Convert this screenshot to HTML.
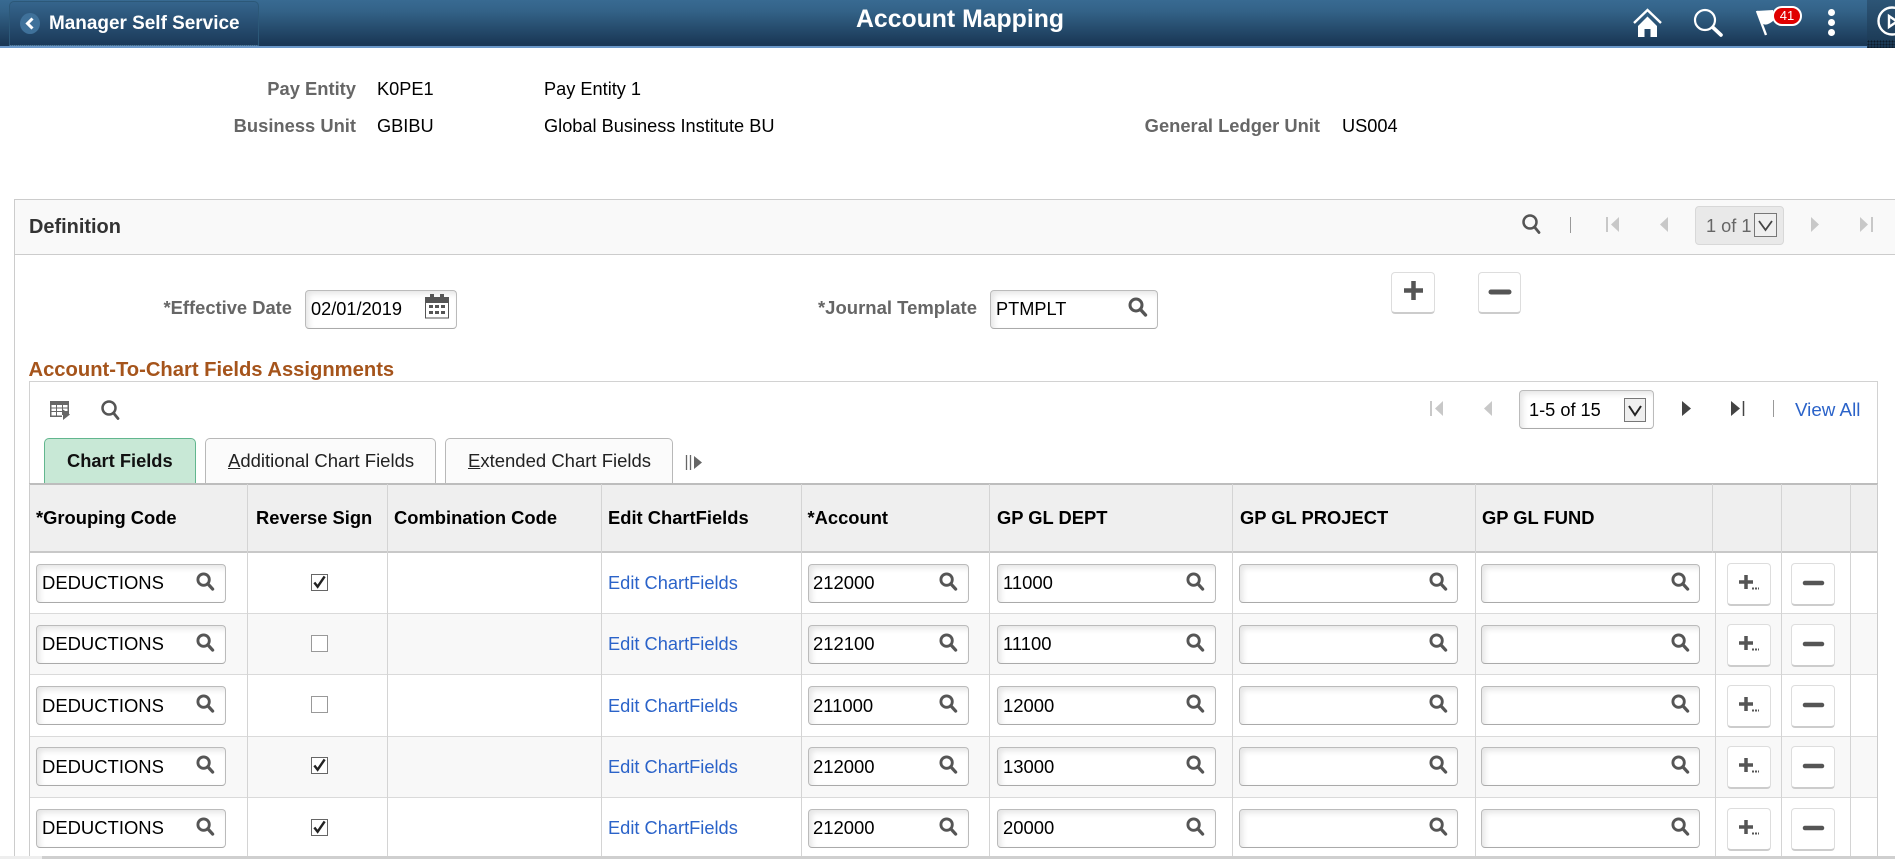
<!DOCTYPE html>
<html><head><meta charset="utf-8"><title>Account Mapping</title>
<style>
html,body{margin:0;padding:0;background:#fff;width:1895px;height:859px;overflow:hidden}
body{position:relative;font-family:"Liberation Sans",Arial,sans-serif;font-size:18.2px;color:#000}
div,span,a,svg{position:absolute;box-sizing:border-box}
.t{white-space:nowrap;line-height:20px;height:20px}
.l{font-weight:bold;color:#666;text-align:right;font-size:18.35px}
.h{font-weight:bold;color:#000;font-size:18.35px}
.rr .t{font-size:18.45px}
a{color:#2b63c9;text-decoration:none}
.rr a.t{font-size:18.25px}
u{text-decoration:underline}
.i{height:39px;background:#fff;border:1px solid #bbb;border-bottom-color:#aaa;border-radius:4px;box-shadow:inset 3px 3px 6px rgba(0,0,0,.1)}
.b{width:44px;height:43px;background:#fff;border:1px solid #ddd;border-bottom:2px solid #ccc;border-radius:4px}
.v{width:1px;background:#d4d4d4}
.rw{left:30px;width:1847px;height:1px;background:#dadada}
.ck{left:311px;width:17px;height:17px;background:#fff;border:1px solid #666}
.un{border-color:#999}
.tab{top:438px;height:46px;border:1px solid #b8b8b8;border-bottom:none;border-radius:5px 5px 0 0;background:#fbfbfb}
.tt{font-size:18.5px}
</style></head><body>
<svg width="0" height="0" style="left:0;top:0"><defs>
<symbol id="s" viewBox="0 0 20 20"><circle cx="8" cy="8" r="6" fill="none" stroke="#555" stroke-width="3"/><path d="M12.5 12.5L17.500 18" stroke="#555" stroke-width="3.400" stroke-linecap="round"/></symbol>
<symbol id="n" viewBox="0 0 20 20"><circle cx="8" cy="8" r="6.500" fill="none" stroke="#555" stroke-width="2.500"/><path d="M12.500 13L17 18.500" stroke="#555" stroke-width="2.800" stroke-linecap="round"/></symbol>
<symbol id="c" viewBox="0 0 16 16"><path d="M2.500 8l3.500 4.500L13.500 1.500" fill="none" stroke="#222" stroke-width="2.600"/></symbol>
</defs></svg>

<!-- header -->
<div style="left:0;top:0;width:1895px;height:48px;background:linear-gradient(#386a92,#336287 25%,#1a3856 95%);border-bottom:2px solid #6b98c9"></div>
<div style="left:9px;top:1px;width:250px;height:45px;border:1px solid #2c5878;border-bottom:1px dotted #5c7e9a;border-radius:5px 5px 0 0;background:linear-gradient(#35658c,#1b3a59)"></div>
<div style="left:20px;top:13px;width:20px;height:21px;border-radius:50%;background:#3f719a"></div>
<svg style="left:20px;top:13px" width="20" height="21"><path d="M12.500 5.500L7.500 10.500L12.500 15.500" fill="none" stroke="#fff" stroke-width="3"/></svg>
<span class="t" style="left:49px;top:14px;font-weight:bold;color:#fff;font-size:18.95px">Manager Self Service</span>
<span class="t" style="left:856px;top:9px;font-weight:bold;color:#fff;font-size:24.8px;line-height:22px">Account Mapping</span>
<svg style="left:1633px;top:8px" width="29" height="30"><path d="M1 15L14.500 2L28 15" fill="none" stroke="#fff" stroke-width="2.400"/><path d="M5 18L14.500 8.500L24 18V29H17.500V21H11.500V29H5Z" fill="#fff"/></svg>
<svg style="left:1693px;top:8px" width="31" height="30"><circle cx="12" cy="12" r="10" fill="none" stroke="#fff" stroke-width="2.200"/><path d="M20 19.500L28 27" stroke="#fff" stroke-width="3.600" stroke-linecap="round"/></svg>
<svg style="left:1755px;top:8px" width="20" height="30"><path d="M1 3L18 2L18 13Q12 18 8 16L3 5Z" fill="#fff"/><path d="M2 3L11 27" stroke="#fff" stroke-width="2.400"/></svg>
<div style="left:1772px;top:6px;width:30px;height:20px;background:#e00000;border:2px solid #fff;border-radius:10px"></div>
<span class="t" style="left:1772px;top:6px;width:30px;text-align:center;color:#fff;font-size:13px;line-height:19px">41</span>
<div style="left:1828px;top:9px;width:7px;height:7px;border-radius:50%;background:#fff"></div>
<div style="left:1828px;top:19px;width:7px;height:7px;border-radius:50%;background:#fff"></div>
<div style="left:1828px;top:29px;width:7px;height:7px;border-radius:50%;background:#fff"></div>
<div style="left:1867px;top:0;width:28px;height:48px;background:linear-gradient(#2d5576,#1a3752)"></div>
<div style="left:1867px;top:40px;width:28px;height:8px;background-image:radial-gradient(#0d1c2b 40%,transparent 45%);background-size:3px 3px"></div>
<svg style="left:1867px;top:0" width="28" height="40"><circle cx="25" cy="21" r="13.500" fill="none" stroke="#fff" stroke-width="2.400"/><path d="M22 16L30 21.500L22 27Z" fill="none" stroke="#fff" stroke-width="2.400"/></svg>

<!-- top fields -->
<span class="t l" style="left:200px;width:156px;top:79px">Pay Entity</span>
<span class="t" style="left:377px;top:79px">K0PE1</span>
<span class="t" style="left:544px;top:79px">Pay Entity 1</span>
<span class="t l" style="left:200px;width:156px;top:116px">Business Unit</span>
<span class="t" style="left:377px;top:116px">GBIBU</span>
<span class="t" style="left:544px;top:116px">Global Business Institute BU</span>
<span class="t l" style="left:1120px;width:200px;top:116px">General Ledger Unit</span>
<span class="t" style="left:1342px;top:116px">US004</span>

<!-- definition -->
<div style="left:14px;top:199px;width:1881px;height:56px;background:#f9f9f9;border-top:1px solid #ccc;border-bottom:1px solid #ccc"></div>
<div style="left:14px;top:199px;width:1px;height:657px;background:#ccc"></div>
<span class="t" style="left:29px;top:217px;font-weight:bold;color:#333;font-size:19.95px">Definition</span>
<svg style="left:1522px;top:214px" width="20" height="20"><use href="#n"/></svg>
<div style="left:1570px;top:217px;width:1px;height:16px;background:#999"></div>
<svg style="left:1606px;top:216px" width="14" height="17"><path d="M1 1V16" stroke="#c8c8c8" stroke-width="2"/><path d="M13 1V16L5 8.500Z" fill="#c8c8c8"/></svg>
<svg style="left:1658px;top:216px" width="11" height="17"><path d="M10 1V16L2 8.500Z" fill="#c8c8c8"/></svg>
<div style="left:1695px;top:206px;width:89px;height:39px;background:#e9e9e9;border:1px solid #d8d8d8;border-radius:4px"></div>
<span class="t" style="left:1706px;top:216px;color:#666">1 of 1</span>
<div style="left:1754px;top:213px;width:23px;height:24px;background:#efefef;border:1px solid #777"></div>
<svg style="left:1754px;top:213px" width="23" height="24"><path d="M5 8L11.500 17L18 8" fill="none" stroke="#444" stroke-width="1.800"/></svg>
<svg style="left:1809px;top:216px" width="12" height="17"><path d="M2 1V16L10 8.500Z" fill="#c8c8c8"/></svg>
<svg style="left:1859px;top:216px" width="15" height="17"><path d="M1 1V16L9 8.500Z" fill="#c8c8c8"/><path d="M13 1V16" stroke="#c8c8c8" stroke-width="2"/></svg>

<span class="t l" style="left:120px;width:172px;top:298px">*Effective Date</span>
<div class="i" style="left:305px;top:290px;width:152px"></div>
<span class="t" style="left:311px;top:299px;font-size:18.2px">02/01/2019</span>
<svg style="left:424px;top:293px" width="26" height="26"><path d="M1 4H6V1H10V4H16V1H20V4H25V10H1Z" fill="#555"/><rect x="1.500" y="8" width="23" height="17" fill="none" stroke="#555"/><g fill="#555"><rect x="5" y="12" width="4" height="3"/><rect x="11" y="12" width="4" height="3"/><rect x="17" y="12" width="4" height="3"/><rect x="5" y="18" width="4" height="3"/><rect x="11" y="18" width="4" height="3"/><rect x="17" y="18" width="4" height="3"/></g></svg>

<span class="t l" style="left:780px;width:197px;top:298px;font-size:18.5px">*Journal Template</span>
<div class="i" style="left:990px;top:290px;width:168px"></div>
<span class="t" style="left:996px;top:299px;font-size:18.2px">PTMPLT</span>
<svg style="left:1128px;top:297px" width="20" height="20"><use href="#s"/></svg>

<div class="b" style="left:1391px;top:272px;height:42px;width:44px"></div>
<svg style="left:1392px;top:270px" width="43" height="42"><path d="M21.500 11V30M12 20.500H31" stroke="#555" stroke-width="4.500"/></svg>
<div class="b" style="left:1478px;top:272px;height:42px;width:43px"></div>
<svg style="left:1478px;top:272px" width="43" height="42"><path d="M13 20H31" stroke="#555" stroke-width="5" stroke-linecap="round"/></svg>

<span class="t" style="left:28.5px;top:360px;font-weight:bold;color:#a5541b;font-size:20.2px">Account-To-Chart Fields Assignments</span>

<!-- grid frame -->
<div style="left:29px;top:381px;width:1849px;height:103px;border:1px solid #d2d2d2;border-bottom:none"></div>
<svg style="left:49px;top:399px" width="22" height="22"><path d="M1 2H20V16H13V18H1Z" fill="#666"/><g fill="#fff"><rect x="2.500" y="6" width="4.500" height="2.500"/><rect x="8" y="6" width="5" height="2.500"/><rect x="14" y="6" width="4.500" height="2.500"/><rect x="2.500" y="9.500" width="4.500" height="2.500"/><rect x="8" y="9.500" width="5" height="2.500"/><rect x="14" y="9.500" width="4.500" height="2.500"/><rect x="2.500" y="13" width="4.500" height="3.500"/><rect x="8" y="13" width="5" height="3.500"/></g><path d="M14 10.500L21 15.500L14 21Z" fill="#666"/></svg>
<svg style="left:101px;top:400px" width="20" height="20"><use href="#n"/></svg>

<svg style="left:1430px;top:400px" width="14" height="17"><path d="M1 1V16" stroke="#c8c8c8" stroke-width="2"/><path d="M13 1V16L5 8.500Z" fill="#c8c8c8"/></svg>
<svg style="left:1481px;top:400px" width="12" height="17"><path d="M11 1V16L3 8.500Z" fill="#c8c8c8"/></svg>
<div class="i" style="left:1519px;top:390px;width:135px"></div>
<span class="t" style="left:1529px;top:400px">1-5 of 15</span>
<div style="left:1624px;top:398px;width:22px;height:24px;background:#efefef;border:1px solid #777"></div>
<svg style="left:1624px;top:398px" width="22" height="24"><path d="M5 8L11 17L17 8" fill="none" stroke="#222" stroke-width="2"/></svg>
<svg style="left:1681px;top:400px" width="12" height="17"><path d="M1 1V16L10 8.500Z" fill="#444"/></svg>
<svg style="left:1730px;top:400px" width="15" height="17"><path d="M1 1V16L10 8.500Z" fill="#444"/><path d="M13.500 1V16" stroke="#444" stroke-width="1.500"/></svg>
<div style="left:1773px;top:400px;width:1px;height:17px;background:#999"></div>
<a class="t" style="left:1795px;top:400px;font-size:18.8px" href="#">View All</a>

<!-- tabs -->
<div class="tab" style="left:44px;width:152px;background:#c8e8d6;border-color:#62b68e"></div>
<span class="t" style="left:67px;top:451px;font-weight:bold;color:#111;font-size:18.3px">Chart Fields</span>
<div class="tab" style="left:205px;width:231px"></div>
<span class="t tt" style="left:228px;top:451px;color:#222"><u>A</u>dditional Chart Fields</span>
<div class="tab" style="left:445px;width:228px"></div>
<span class="t tt" style="left:468px;top:451px;color:#222"><u>E</u>xtended Chart Fields</span>
<svg style="left:685px;top:455px" width="19" height="15"><path d="M1.500 0V15M5.500 0V15" stroke="#666" stroke-width="1.300"/><path d="M9 1V14L17 7.500Z" fill="#666"/></svg>

<!-- table header -->
<div style="left:29px;top:483px;width:1849px;height:70px;background:#efefef;border-top:2px solid #bdbdbd;border-bottom:2px solid #c8c8c8"></div>
<span class="t h" style="left:36px;top:508px">*Grouping Code</span>
<span class="t h" style="left:256px;top:508px">Reverse Sign</span>
<span class="t h" style="left:394px;top:508px">Combination Code</span>
<span class="t h" style="left:608px;top:508px">Edit ChartFields</span>
<span class="t h" style="left:807.500px;top:508px">*Account</span>
<span class="t h" style="left:997px;top:508px">GP GL DEPT</span>
<span class="t h" style="left:1240px;top:508px">GP GL PROJECT</span>
<span class="t h" style="left:1482px;top:508px">GP GL FUND</span>

<!-- rows bg -->
<div style="left:30px;top:614px;width:1847px;height:60px;background:#f8f8f8"></div>
<div style="left:30px;top:737px;width:1847px;height:60px;background:#f8f8f8"></div>
<div class="rw" style="top:613px"></div>
<div class="rw" style="top:674px"></div>
<div class="rw" style="top:736px"></div>
<div class="rw" style="top:797px"></div>

<!-- vertical lines -->
<div class="v" style="left:29px;top:484px;height:372px;background:#ccc"></div>
<div class="v" style="left:247px;top:484px;height:372px"></div>
<div class="v" style="left:387px;top:484px;height:372px"></div>
<div class="v" style="left:601px;top:484px;height:372px"></div>
<div class="v" style="left:801px;top:484px;height:372px"></div>
<div class="v" style="left:989px;top:484px;height:372px"></div>
<div class="v" style="left:1232px;top:484px;height:372px"></div>
<div class="v" style="left:1475px;top:484px;height:372px"></div>
<div class="v" style="left:1712px;top:484px;height:69px"></div>
<div class="v" style="left:1715px;top:553px;height:303px"></div>
<div class="v" style="left:1781px;top:484px;height:372px"></div>
<div class="v" style="left:1850px;top:484px;height:372px"></div>
<div class="v" style="left:1877px;top:484px;height:372px;background:#ccc"></div>

<!-- row 1 -->
<div class="rr" style="left:0;top:564px;width:1895px;height:45px">
<div class="i" style="left:36px;top:0;width:190px"></div><span class="t" style="left:42px;top:9px">DEDUCTIONS</span><svg style="left:196px;top:8px" width="19" height="19"><use href="#s"/></svg>
<div class="ck" style="top:10px"><svg style="left:0;top:0" width="15" height="15" viewBox="0 0 16 16"><use href="#c"/></svg></div>
<a class="t" style="left:608px;top:9px" href="#">Edit ChartFields</a>
<div class="i" style="left:808px;top:0;width:161px"></div><span class="t" style="left:813px;top:9px">212000</span><svg style="left:939px;top:8px" width="19" height="19"><use href="#s"/></svg>
<div class="i" style="left:997px;top:0;width:219px"></div><span class="t" style="left:1003px;top:9px">11000</span><svg style="left:1186px;top:8px" width="19" height="19"><use href="#s"/></svg>
<div class="i" style="left:1239px;top:0;width:219px"></div><svg style="left:1429px;top:8px" width="19" height="19"><use href="#s"/></svg>
<div class="i" style="left:1481px;top:0;width:219px"></div><svg style="left:1671px;top:8px" width="19" height="19"><use href="#s"/></svg>
<div class="b" style="left:1727px;top:-1px"></div><svg style="left:1727px;top:-1px" width="43" height="43"><path d="M19 12V26M12 19H26" stroke="#555" stroke-width="3.500"/><path d="M25 25.500H32" stroke="#555" stroke-width="2" stroke-dasharray="2 1"/></svg>
<div class="b" style="left:1791px;top:-1px"></div><svg style="left:1791px;top:-1px" width="43" height="43"><path d="M14 20H31" stroke="#555" stroke-width="4.500" stroke-linecap="round"/></svg>
</div>
<!-- row 2 -->
<div class="rr" style="left:0;top:625px;width:1895px;height:45px">
<div class="i" style="left:36px;top:0;width:190px"></div><span class="t" style="left:42px;top:9px">DEDUCTIONS</span><svg style="left:196px;top:8px" width="19" height="19"><use href="#s"/></svg>
<div class="ck un" style="top:10px"></div>
<a class="t" style="left:608px;top:9px" href="#">Edit ChartFields</a>
<div class="i" style="left:808px;top:0;width:161px"></div><span class="t" style="left:813px;top:9px">212100</span><svg style="left:939px;top:8px" width="19" height="19"><use href="#s"/></svg>
<div class="i" style="left:997px;top:0;width:219px"></div><span class="t" style="left:1003px;top:9px">11100</span><svg style="left:1186px;top:8px" width="19" height="19"><use href="#s"/></svg>
<div class="i" style="left:1239px;top:0;width:219px"></div><svg style="left:1429px;top:8px" width="19" height="19"><use href="#s"/></svg>
<div class="i" style="left:1481px;top:0;width:219px"></div><svg style="left:1671px;top:8px" width="19" height="19"><use href="#s"/></svg>
<div class="b" style="left:1727px;top:-1px"></div><svg style="left:1727px;top:-1px" width="43" height="43"><path d="M19 12V26M12 19H26" stroke="#555" stroke-width="3.500"/><path d="M25 25.500H32" stroke="#555" stroke-width="2" stroke-dasharray="2 1"/></svg>
<div class="b" style="left:1791px;top:-1px"></div><svg style="left:1791px;top:-1px" width="43" height="43"><path d="M14 20H31" stroke="#555" stroke-width="4.500" stroke-linecap="round"/></svg>
</div>
<!-- row 3 -->
<div class="rr" style="left:0;top:686px;width:1895px;height:45px">
<div class="i" style="left:36px;top:0;width:190px"></div><span class="t" style="left:42px;top:10px">DEDUCTIONS</span><svg style="left:196px;top:8px" width="19" height="19"><use href="#s"/></svg>
<div class="ck un" style="top:10px"></div>
<a class="t" style="left:608px;top:10px" href="#">Edit ChartFields</a>
<div class="i" style="left:808px;top:0;width:161px"></div><span class="t" style="left:813px;top:10px">211000</span><svg style="left:939px;top:8px" width="19" height="19"><use href="#s"/></svg>
<div class="i" style="left:997px;top:0;width:219px"></div><span class="t" style="left:1003px;top:10px">12000</span><svg style="left:1186px;top:8px" width="19" height="19"><use href="#s"/></svg>
<div class="i" style="left:1239px;top:0;width:219px"></div><svg style="left:1429px;top:8px" width="19" height="19"><use href="#s"/></svg>
<div class="i" style="left:1481px;top:0;width:219px"></div><svg style="left:1671px;top:8px" width="19" height="19"><use href="#s"/></svg>
<div class="b" style="left:1727px;top:-1px"></div><svg style="left:1727px;top:-1px" width="43" height="43"><path d="M19 12V26M12 19H26" stroke="#555" stroke-width="3.500"/><path d="M25 25.500H32" stroke="#555" stroke-width="2" stroke-dasharray="2 1"/></svg>
<div class="b" style="left:1791px;top:-1px"></div><svg style="left:1791px;top:-1px" width="43" height="43"><path d="M14 20H31" stroke="#555" stroke-width="4.500" stroke-linecap="round"/></svg>
</div>
<!-- row 4 -->
<div class="rr" style="left:0;top:747px;width:1895px;height:45px">
<div class="i" style="left:36px;top:0;width:190px"></div><span class="t" style="left:42px;top:10px">DEDUCTIONS</span><svg style="left:196px;top:8px" width="19" height="19"><use href="#s"/></svg>
<div class="ck" style="top:10px"><svg style="left:0;top:0" width="15" height="15" viewBox="0 0 16 16"><use href="#c"/></svg></div>
<a class="t" style="left:608px;top:10px" href="#">Edit ChartFields</a>
<div class="i" style="left:808px;top:0;width:161px"></div><span class="t" style="left:813px;top:10px">212000</span><svg style="left:939px;top:8px" width="19" height="19"><use href="#s"/></svg>
<div class="i" style="left:997px;top:0;width:219px"></div><span class="t" style="left:1003px;top:10px">13000</span><svg style="left:1186px;top:8px" width="19" height="19"><use href="#s"/></svg>
<div class="i" style="left:1239px;top:0;width:219px"></div><svg style="left:1429px;top:8px" width="19" height="19"><use href="#s"/></svg>
<div class="i" style="left:1481px;top:0;width:219px"></div><svg style="left:1671px;top:8px" width="19" height="19"><use href="#s"/></svg>
<div class="b" style="left:1727px;top:-1px"></div><svg style="left:1727px;top:-1px" width="43" height="43"><path d="M19 12V26M12 19H26" stroke="#555" stroke-width="3.500"/><path d="M25 25.500H32" stroke="#555" stroke-width="2" stroke-dasharray="2 1"/></svg>
<div class="b" style="left:1791px;top:-1px"></div><svg style="left:1791px;top:-1px" width="43" height="43"><path d="M14 20H31" stroke="#555" stroke-width="4.500" stroke-linecap="round"/></svg>
</div>
<!-- row 5 -->
<div class="rr" style="left:0;top:809px;width:1895px;height:45px">
<div class="i" style="left:36px;top:0;width:190px"></div><span class="t" style="left:42px;top:9px">DEDUCTIONS</span><svg style="left:196px;top:8px" width="19" height="19"><use href="#s"/></svg>
<div class="ck" style="top:10px"><svg style="left:0;top:0" width="15" height="15" viewBox="0 0 16 16"><use href="#c"/></svg></div>
<a class="t" style="left:608px;top:9px" href="#">Edit ChartFields</a>
<div class="i" style="left:808px;top:0;width:161px"></div><span class="t" style="left:813px;top:9px">212000</span><svg style="left:939px;top:8px" width="19" height="19"><use href="#s"/></svg>
<div class="i" style="left:997px;top:0;width:219px"></div><span class="t" style="left:1003px;top:9px">20000</span><svg style="left:1186px;top:8px" width="19" height="19"><use href="#s"/></svg>
<div class="i" style="left:1239px;top:0;width:219px"></div><svg style="left:1429px;top:8px" width="19" height="19"><use href="#s"/></svg>
<div class="i" style="left:1481px;top:0;width:219px"></div><svg style="left:1671px;top:8px" width="19" height="19"><use href="#s"/></svg>
<div class="b" style="left:1727px;top:-1px"></div><svg style="left:1727px;top:-1px" width="43" height="43"><path d="M19 12V26M12 19H26" stroke="#555" stroke-width="3.500"/><path d="M25 25.500H32" stroke="#555" stroke-width="2" stroke-dasharray="2 1"/></svg>
<div class="b" style="left:1791px;top:-1px"></div><svg style="left:1791px;top:-1px" width="43" height="43"><path d="M14 20H31" stroke="#555" stroke-width="4.500" stroke-linecap="round"/></svg>
</div>

<!-- bottom scrollbar -->
<div style="left:0;top:856px;width:1895px;height:3px;background:#cfcfcf"></div>
<div style="left:0;top:856px;width:42px;height:3px;background:#eee"></div>
</body></html>
